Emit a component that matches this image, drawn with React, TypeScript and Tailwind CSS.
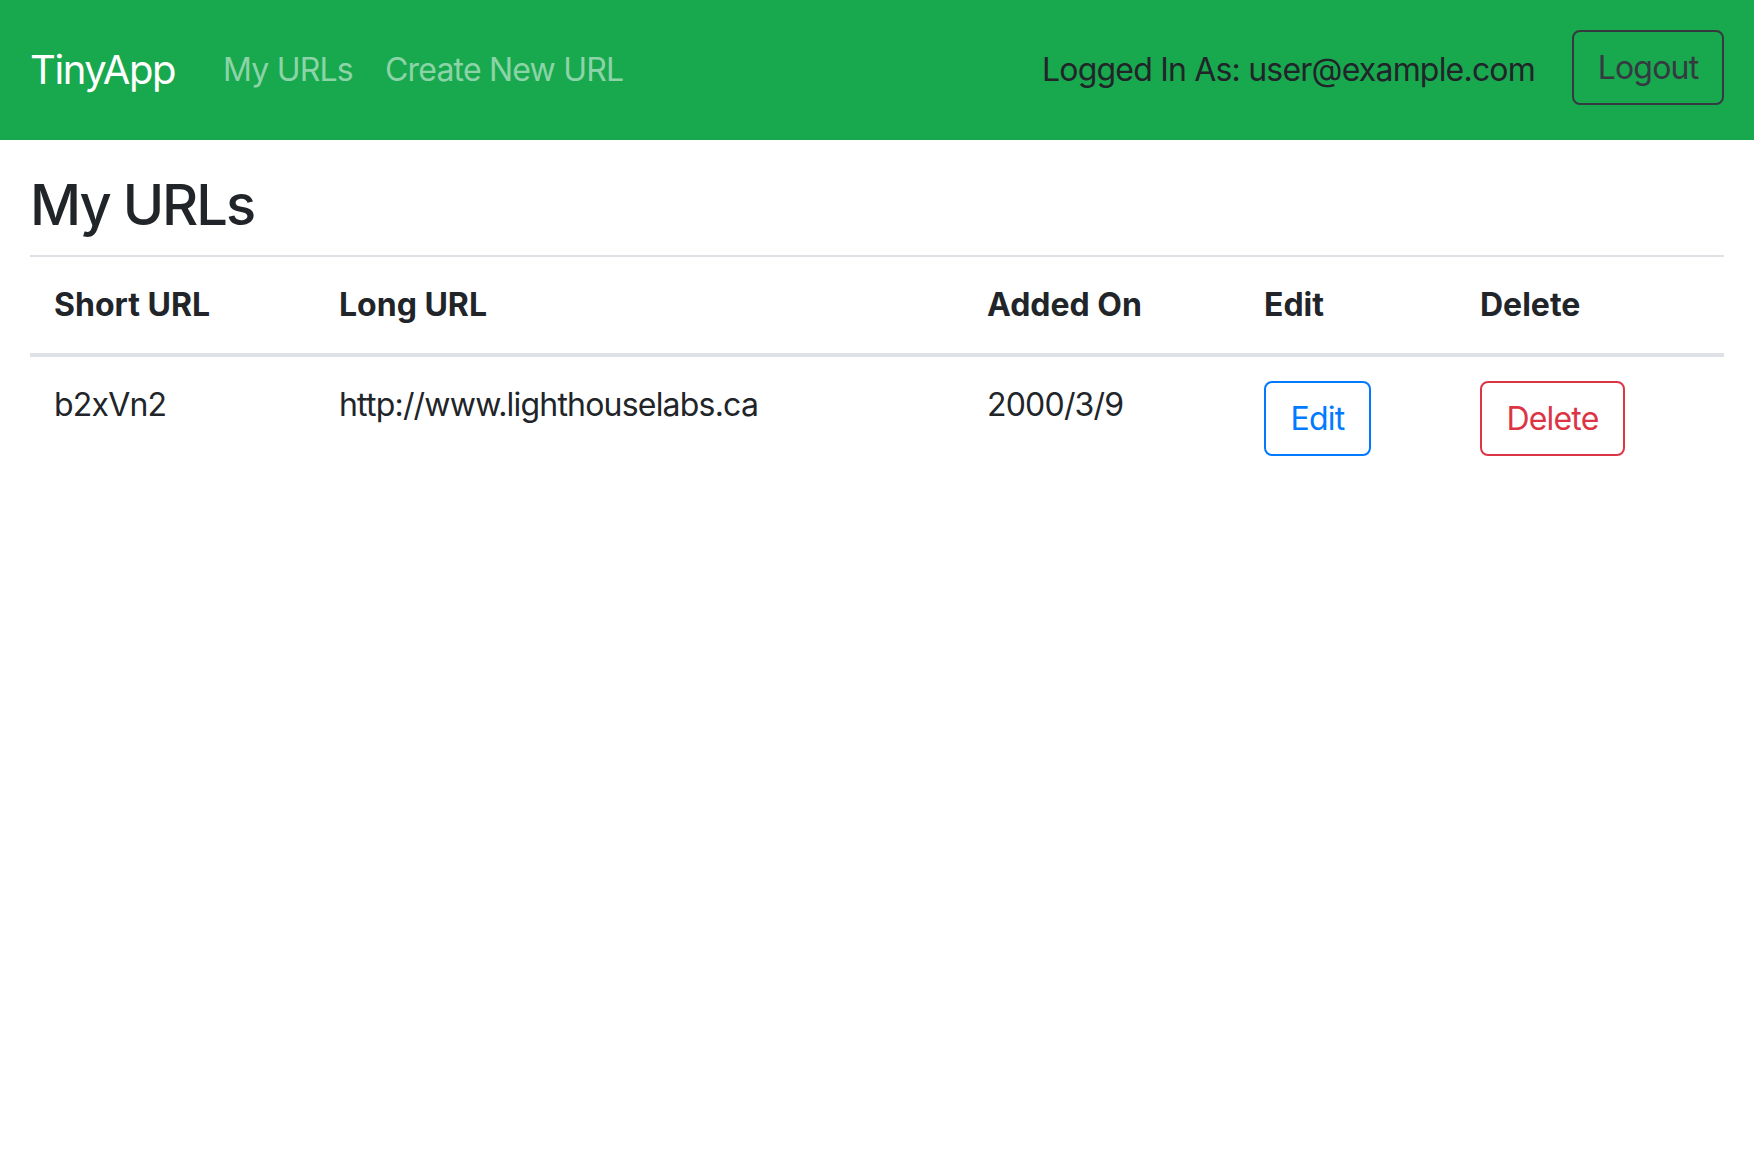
export default function App() {
  const font = { fontFamily: "Inter, 'Liberation Sans', sans-serif" };

  return (
    <div className="min-h-[1168px] bg-white text-[#212529]" style={font}>
      <nav className="flex h-[140px] items-center bg-[#18a84e] px-[30px]">
        <a className="mr-[32px] text-[40px] leading-[60px] tracking-[-1.4px] text-white">TinyApp</a>
        <a className="px-[16px] text-[32px] leading-[48px] tracking-[-0.8px] text-[#8cd4a7]">My URLs</a>
        <a className="px-[16px] text-[32px] leading-[48px] tracking-[-0.8px] text-[#8cd4a7]">Create New URL</a>
        <div className="ml-auto flex items-center">
          <span className="mr-[37px] text-[32px] leading-[48px] tracking-[-0.8px] text-[#212529]">
            Logged In As: user@example.com
          </span>
          <button className="-mt-[5px] h-[75px] w-[152px] rounded-[8px] border-2 border-[#343a40] text-[32px] leading-[48px] tracking-[-0.8px] text-[#343a40]">
            Logout
          </button>
        </div>
      </nav>

      <main className="px-[30px] pt-[32px]">
        <h3 className="mb-[16px] text-[56px] font-medium leading-[67px] tracking-[-2px]">My URLs</h3>

        <table className="w-full border-collapse text-[32px] leading-[48px]">
          <thead>
            <tr className="border-t-2 border-b-4 border-[#dee2e6] text-left">
              <th className="w-[285px] p-[24px] font-bold">Short URL</th>
              <th className="w-[648px] p-[24px] font-bold">Long URL</th>
              <th className="w-[277px] p-[24px] font-bold">Added On</th>
              <th className="w-[216px] p-[24px] font-bold">Edit</th>
              <th className="p-[24px] font-bold">Delete</th>
            </tr>
          </thead>
          <tbody className="tracking-[-0.8px]">
            <tr className="align-top">
              <td className="p-[24px]">b2xVn2</td>
              <td className="p-[24px]">http://www.lighthouselabs.ca</td>
              <td className="p-[24px]">2000/3/9</td>
              <td className="p-[24px]">
                <button className="h-[75px] w-[107px] rounded-[8px] border-2 border-[#007bff] text-[32px] text-[#007bff]">
                  Edit
                </button>
              </td>
              <td className="p-[24px]">
                <button className="h-[75px] w-[145px] rounded-[8px] border-2 border-[#dc3545] text-[32px] text-[#dc3545]">
                  Delete
                </button>
              </td>
            </tr>
          </tbody>
        </table>
      </main>
    </div>
  );
}
